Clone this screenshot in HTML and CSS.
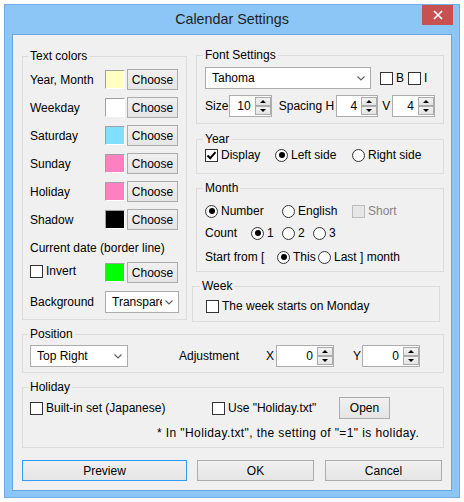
FILE: index.html
```html
<!DOCTYPE html>
<html>
<head>
<meta charset="utf-8">
<title>Calendar Settings</title>
<link rel="stylesheet" href="styles.css">
</head>
<body>
<div class="window">
  <div class="titlebar">
    <span class="title">Calendar Settings</span>
    <span class="close"><svg width="10" height="10" viewBox="0 0 10 10"><path d="M1 1L9 9M9 1L1 9" stroke="#fff" stroke-width="1.7" fill="none"/></svg></span>
  </div>
  <div class="client">
    <div class="top">
      <fieldset class="group colors">
        <legend>Text colors</legend>
        <div class="crow first"><span class="clabel">Year, Month</span><span class="swatch sw-year"></span><button class="btn choose">Choose</button></div>
        <div class="crow"><span class="clabel">Weekday</span><span class="swatch sw-weekday"></span><button class="btn choose">Choose</button></div>
        <div class="crow"><span class="clabel">Saturday</span><span class="swatch sw-sat"></span><button class="btn choose">Choose</button></div>
        <div class="crow"><span class="clabel">Sunday</span><span class="swatch sw-sun"></span><button class="btn choose">Choose</button></div>
        <div class="crow"><span class="clabel">Holiday</span><span class="swatch sw-hol"></span><button class="btn choose">Choose</button></div>
        <div class="crow"><span class="clabel">Shadow</span><span class="swatch sw-shadow"></span><button class="btn choose">Choose</button></div>
        <div class="curdate">Current date (border line)</div>
        <div class="crow invert"><span class="clabel"><span class="chk"><span class="cb"></span>Invert</span></span><span class="swatch sw-green"></span><button class="btn choose">Choose</button></div>
        <div class="crow bgrow"><span class="clabel">Background</span><span class="combo bgcombo"><span class="cval">Transpare</span><svg class="chev" width="8" height="5" viewBox="0 0 8 5"><path d="M0.5 0.5L4 4L7.5 0.5" fill="none" stroke="#606060" stroke-width="1.2"/></svg></span></div>
      </fieldset>
      <div class="rightcol">
        <fieldset class="group font">
          <legend>Font Settings</legend>
          <div class="frow1">
            <span class="combo fontcombo"><span class="cval">Tahoma</span><svg class="chev" width="8" height="5" viewBox="0 0 8 5"><path d="M0.5 0.5L4 4L7.5 0.5" fill="none" stroke="#606060" stroke-width="1.2"/></svg></span>
            <span class="chk bchk"><span class="cb"></span>B</span>
            <span class="chk ichk"><span class="cb"></span>I</span>
          </div>
          <div class="frow2">
            <span class="sizelbl">Size</span>
            <span class="spin w43"><span class="sval">10</span><span class="arrows"><span class="ab up"></span><span class="ab dn"></span></span></span>
            <span class="spclbl">Spacing H</span>
            <span class="spin w42"><span class="sval">4</span><span class="arrows"><span class="ab up"></span><span class="ab dn"></span></span></span>
            <span class="vlbl">V</span>
            <span class="spin w43"><span class="sval">4</span><span class="arrows"><span class="ab up"></span><span class="ab dn"></span></span></span>
          </div>
        </fieldset>
        <fieldset class="group year">
          <legend>Year</legend>
          <div class="orow yrow">
            <span class="chk i70"><span class="cb on"><svg width="11" height="11" viewBox="0 0 11 11"><path d="M1.5 5.5L4.2 8.3L9.5 2.2" fill="none" stroke="#000" stroke-width="2"/></svg></span>Display</span>
            <span class="chk i77"><span class="rb on"></span>Left side</span>
            <span class="chk"><span class="rb"></span>Right side</span>
          </div>
        </fieldset>
        <fieldset class="group month">
          <legend>Month</legend>
          <div class="orow mrow1">
            <span class="chk i77"><span class="rb on"></span>Number</span>
            <span class="chk i70"><span class="rb"></span>English</span>
            <span class="chk disabled"><span class="cb"></span>Short</span>
          </div>
          <div class="orow mrow2">
            <span class="i46">Count</span>
            <span class="chk i31"><span class="rb on"></span>1</span>
            <span class="chk i31"><span class="rb"></span>2</span>
            <span class="chk"><span class="rb"></span>3</span>
          </div>
          <div class="orow mrow3">
            <span class="i72">Start from [</span>
            <span class="chk i41"><span class="rb on"></span>This</span>
            <span class="chk"><span class="rb"></span>Last ] month</span>
          </div>
        </fieldset>
        <fieldset class="group week">
          <legend>Week</legend>
          <div class="orow wrow">
            <span class="chk"><span class="cb"></span>The week starts on Monday</span>
          </div>
        </fieldset>
      </div>
    </div>
    <fieldset class="group position">
      <legend>Position</legend>
      <div class="prow">
        <span class="combo poscombo"><span class="cval">Top Right</span><svg class="chev" width="8" height="5" viewBox="0 0 8 5"><path d="M0.5 0.5L4 4L7.5 0.5" fill="none" stroke="#606060" stroke-width="1.2"/></svg></span>
        <span class="adjlbl">Adjustment</span>
        <span class="xlbl">X</span>
        <span class="spin w58"><span class="sval">0</span><span class="arrows"><span class="ab up"></span><span class="ab dn"></span></span></span>
        <span class="ylbl">Y</span>
        <span class="spin w58"><span class="sval">0</span><span class="arrows"><span class="ab up"></span><span class="ab dn"></span></span></span>
      </div>
    </fieldset>
    <fieldset class="group holiday">
      <legend>Holiday</legend>
      <div class="hrow">
        <span class="chk"><span class="cb"></span>Built-in set (Japanese)</span>
        <span class="chk"><span class="cb"></span>Use "Holiday.txt"</span>
        <button class="btn open">Open</button>
      </div>
      <div class="note">* In "Holiday.txt", the setting of "=1" is holiday.</div>
    </fieldset>
    <div class="buttons">
      <button class="btn big preview">Preview</button>
      <button class="btn big ok">OK</button>
      <button class="btn big cancel">Cancel</button>
    </div>
  </div>
</div>
</body>
</html>
```

FILE: styles.css
```css
* { box-sizing: border-box; }

body {
  margin: 0;
  background: #ffffff;
  font-family: "Liberation Sans", Arial, sans-serif;
  font-size: 12px;
  color: #000;
}

.window {
  margin: 4px 0 0 4px;
  width: 456px;
  height: 494px;
  background: #8cc6f6;
  border: 1px solid #72aee6;
  display: flex;
  flex-direction: column;
}

.titlebar {
  height: 29px;
  display: grid;
  grid-template-columns: 1fr auto 1fr;
  align-items: start;
}

.title {
  grid-column: 2;
  font-size: 14.3px;
  line-height: 28px;
  color: #1e1e1e;
}

.close {
  grid-column: 3;
  justify-self: end;
  margin-right: 6px;
  width: 31px;
  height: 20px;
  background: #c75050;
  display: flex;
  align-items: center;
  justify-content: center;
}

.client {
  flex: 1;
  margin: 0 7px 6px 7px;
  border: 1px solid #6aa5dc;
  background: #f0f0f0;
  padding: 13px 7px 7px 9px;
}

.top {
  display: flex;
  align-items: flex-start;
}

.group {
  margin: 0;
  border: 1px solid #dcdcdc;
  padding: 0 8px 6px 8px;
  min-width: 0;
}

.group legend {
  padding: 0 2px;
  margin-left: -2px;
  line-height: 14px;
}

/* ---- text colors ---- */
.colors {
  width: 165px;
  margin-top: 1px;
  padding-left: 7px;
  padding-right: 4px;
}

.crow {
  display: flex;
  align-items: center;
  height: 21px;
  margin-top: 7px;
}

.crow.first { margin-top: 6px; }

.clabel {
  width: 75px;
  white-space: nowrap;
}

.swatch {
  width: 20px;
  height: 19px;
  border: 1px solid;
  border-color: #a0a0a0 #ffffff #ffffff #a0a0a0;
}

.sw-year { background: #ffffc0; }
.sw-weekday { background: #ffffff; }
.sw-sat { background: #80dfff; }
.sw-sun { background: #ff80c0; }
.sw-hol { background: #ff80c0; }
.sw-shadow { background: #000000; }
.sw-green { background: #00ff00; }

.btn {
  font-family: inherit;
  font-size: 12px;
  color: #000;
  padding: 0;
  border: 1px solid #acacac;
  background: linear-gradient(#f0f0f0, #e5e5e5);
  margin: 0;
}

.choose {
  width: 51px;
  height: 21px;
  margin-left: 2px;
}

.curdate {
  line-height: 14px;
  margin-top: 11px;
}

.crow.invert { margin-top: 7px; }

.crow.bgrow {
  margin-top: 8px;
  height: 22px;
}

/* ---- combo ---- */
.combo {
  display: flex;
  align-items: center;
  height: 22px;
  background: #fff;
  border: 1px solid #acacac;
  padding: 0 5px 0 6px;
  gap: 3px;
}

.cval {
  flex: 1;
  overflow: hidden;
  white-space: nowrap;
}

.chev { flex: none; }

.bgcombo { width: 74px; }
.fontcombo { width: 166px; }
.poscombo { width: 98px; }

/* ---- checks & radios ---- */
.chk {
  display: inline-flex;
  align-items: center;
  gap: 3px;
  white-space: nowrap;
}

.cb {
  width: 13px;
  height: 13px;
  border: 1px solid #333;
  background: #fff;
  display: inline-flex;
  align-items: center;
  justify-content: center;
  flex: none;
}

.rb {
  width: 13px;
  height: 13px;
  border: 1px solid #333;
  border-radius: 50%;
  background: #fff;
  display: inline-flex;
  align-items: center;
  justify-content: center;
  flex: none;
}

.rb.on::after {
  content: "";
  width: 6px;
  height: 6px;
  border-radius: 50%;
  background: #000;
}

.disabled { color: #838383; }
.disabled .cb {
  border-color: #bcbcbc;
  background: #e6e6e6;
}

/* ---- right column ---- */
.rightcol {
  width: 252px;
  margin-left: 5px;
  display: flex;
  flex-direction: column;
}

.rightcol .group {
  width: 248px;
  margin-left: 4px;
}

.frow1 {
  display: flex;
  align-items: center;
  height: 22px;
  margin-top: 5px;
}

.bchk { margin-left: 9px; }
.ichk { margin-left: 4px; }

.frow2 {
  display: flex;
  align-items: center;
  height: 22px;
  margin-top: 6px;
}

.sizelbl { width: 24px; }
.spclbl { width: 58px; margin-left: 7px; }
.vlbl { width: 10px; margin-left: 4px; }

.spin {
  display: flex;
  height: 22px;
  background: #fff;
  border: 1px solid #acacac;
  padding: 1px 0;
}

.w42 { width: 42px; }
.w43 { width: 43px; }
.w58 { width: 58px; }

.sval {
  flex: 1;
  text-align: right;
  padding-right: 4px;
  line-height: 18px;
}

.arrows {
  width: 16px;
  display: flex;
  flex-direction: column;
}

.ab {
  height: 9px;
  border: 1px solid #acacac;
  background: linear-gradient(#f2f2f2, #e4e4e4);
  display: flex;
  align-items: center;
  justify-content: center;
}

.ab.up::after {
  content: "";
  border-left: 3px solid transparent;
  border-right: 3px solid transparent;
  border-bottom: 3px solid #000;
}

.ab.dn::after {
  content: "";
  border-left: 3px solid transparent;
  border-right: 3px solid transparent;
  border-top: 3px solid #000;
}

.year { margin-top: 8px; padding-bottom: 10px; }
.month { margin-top: 7px; }
.rightcol .week {
  margin-top: 7px;
  margin-left: 0;
  padding-left: 13px;
  padding-bottom: 7px;
}
.week legend { margin-left: -6px; }

.orow {
  display: flex;
  align-items: center;
  height: 16px;
}

.yrow { margin-top: 1px; }
.mrow1 { margin-top: 8px; }
.mrow2 { margin-top: 6px; }
.mrow3 { margin-top: 8px; }
.wrow { margin-top: 5px; }

.i31 { width: 31px; }
.i41 { width: 41px; }
.i46 { width: 46px; }
.i70 { width: 70px; }
.i72 { width: 72px; }
.i77 { width: 77px; }

/* ---- position ---- */
.position {
  margin-top: 5px;
  width: 422px;
  padding-left: 7px;
  padding-bottom: 5px;
}

.prow {
  display: flex;
  align-items: center;
  height: 22px;
  margin-top: 4px;
}

.adjlbl { width: 87px; margin-left: 51px; }
.xlbl { width: 10px; }
.ylbl { width: 9px; margin-left: 19px; }

/* ---- holiday ---- */
.holiday {
  margin-top: 7px;
  width: 422px;
  padding-left: 7px;
  padding-bottom: 7px;
}

.hrow {
  display: grid;
  grid-template-columns: 182px 127px 51px;
  align-items: center;
  height: 22px;
  margin-top: 3px;
}

.open { width: 51px; height: 22px; }

.note {
  line-height: 14px;
  margin-top: 7px;
  margin-left: 127px;
  white-space: nowrap;
  letter-spacing: 0.4px;
}

/* ---- bottom buttons ---- */
.buttons {
  display: flex;
  margin-top: 12px;
}

.big { height: 21px; }
.preview { width: 165px; border-color: #3399ff; }
.ok { width: 117px; margin-left: 10px; }
.cancel { width: 117px; margin-left: 11px; }
```
